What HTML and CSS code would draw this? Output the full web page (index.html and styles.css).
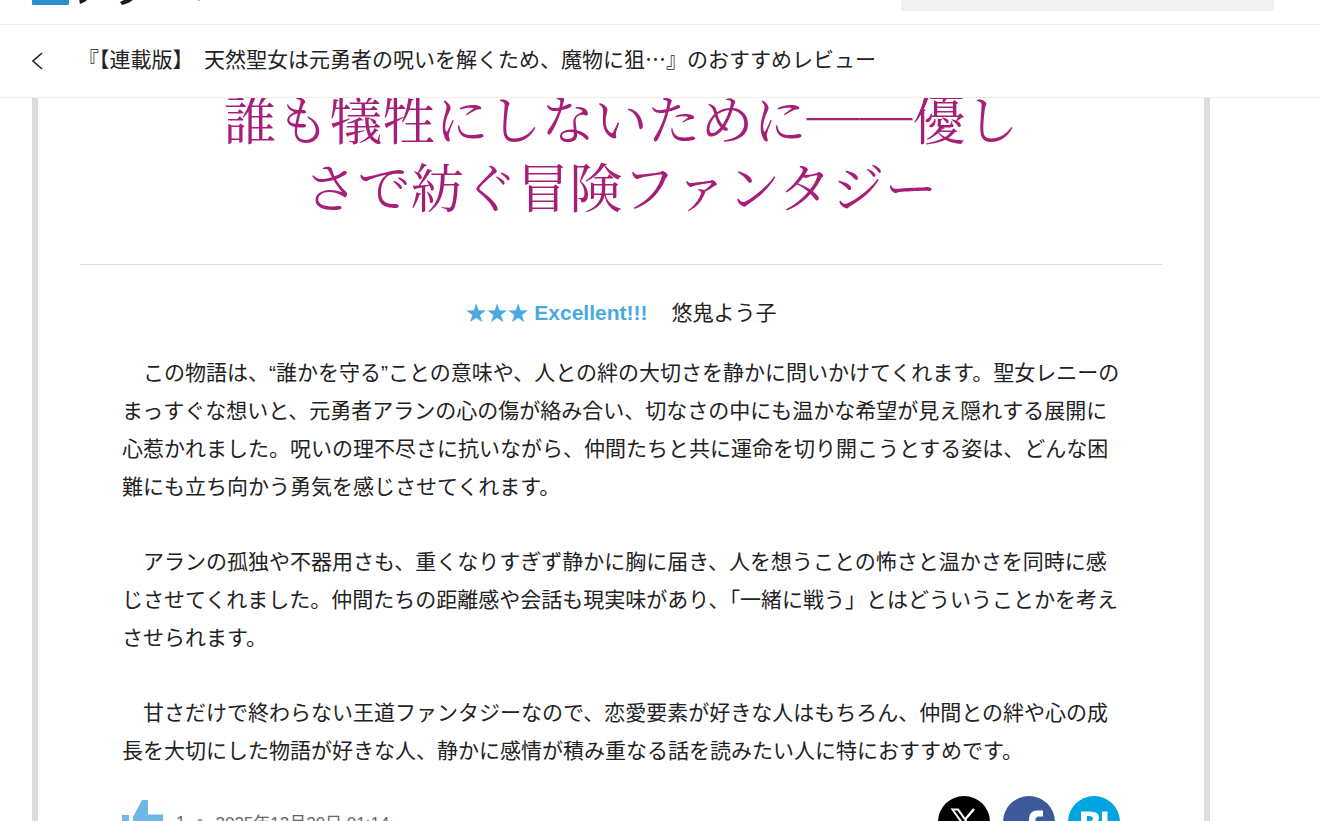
FILE: index.html
```html
<!DOCTYPE html>
<html lang="ja">
<head>
<meta charset="utf-8">
<meta name="viewport" content="width=device-width, initial-scale=1">
<title>おすすめレビュー</title>
<link rel="stylesheet" href="styles.css">
</head>
<body>
<header class="header">
  <div class="topbar">
    <svg class="logo" width="180" height="40" viewBox="0 0 180 40" aria-hidden="true">
      <rect width="37" height="40" rx="1" fill="#2891cb"/>
      <path d="M47 34h9q-2 3-8 5zM88 37l6-3h8q-4 4-12 6z" fill="#231815"/>
      <path d="M166 34h2v2h-2z" fill="#bbb"/>
    </svg>
    <input class="search" type="text" aria-label="検索">
  </div>
  <nav class="subbar">
    <a class="back" href="#" aria-label="戻る">
      <svg width="12" height="20" viewBox="0 0 12 20" fill="none" stroke="#222" stroke-width="1.6"><path d="M10 2L1 10L10 18"/></svg>
    </a>
    <a class="work" href="#">『【連載版】　天然聖女は元勇者の呪いを解くため、魔物に狙…』のおすすめレビュー</a>
  </nav>
</header>
<main class="main">
  <article class="review">
    <h1 class="title">誰も犠牲にしないために──優し<br>さで紡ぐ冒険ファンタジー</h1>
    <div class="byline"><span class="rating">★★★ Excellent!!!</span><a class="author" href="#">悠鬼よう子</a></div>
    <div class="text">
      <p>　この物語は、“誰かを守る”ことの意味や、人との絆の大切さを静かに問いかけてくれます。聖女レニーのまっすぐな想いと、元勇者アランの心の傷が絡み合い、切なさの中にも温かな希望が見え隠れする展開に心惹かれました。呪いの理不尽さに抗いながら、仲間たちと共に運命を切り開こうとする姿は、どんな困難にも立ち向かう勇気を感じさせてくれます。</p>
      <p>　アランの孤独や不器用さも、重くなりすぎず静かに胸に届き、人を想うことの怖さと温かさを同時に感じさせてくれました。仲間たちの距離感や会話も現実味があり、「一緒に戦う」とはどういうことかを考えさせられます。</p>
      <p>　甘さだけで終わらない王道ファンタジーなので、恋愛要素が好きな人はもちろん、仲間との絆や心の成長を大切にした物語が好きな人、静かに感情が積み重なる話を読みたい人に特におすすめです。</p>
    </div>
    <footer class="footer">
      <button class="like" type="button" aria-label="いいね">
        <svg width="42" height="42" viewBox="0 0 42 42" fill="#6fb8e4"><path d="M0 15h7v25H0zM11 17L20 0h6v14.500h15V25l-5 15H11z"/></svg>
      </button>
      <span class="count">1</span>
      <span class="dot"></span>
      <time class="date">2025年12月20日 01:14</time>
      <div class="share">
        <a class="social x" href="#" aria-label="X"><svg width="52" height="52" viewBox="0 0 52 52" fill="none" stroke="#fff"><path d="M14.500 13.500h5.500L37.500 38h-5.500z" stroke-width="2"/><path d="M36 13L27.500 23M24 28L15 38.500" stroke-width="2.400"/></svg></a>
        <a class="social facebook" href="#" aria-label="Facebook"><svg width="52" height="52" viewBox="0 0 52 52" fill="#fff"><path d="M40 14.500v6h-4q-3.500 0-3.500 3.500v4h7l-1 6h-6v18H26V34h-6v-6h6v-5q0-8.500 8.500-8.500z"/></svg></a>
        <a class="social hatena" href="#" aria-label="はてなブックマーク"><svg width="52" height="52" viewBox="0 0 52 52" fill="#fff"><path fill-rule="evenodd" d="M13 15.500h9q9 0 9 6 0 4-4 5 5 1 5 5.500 0 7-10 7h-9zm6 4.500v5h2q4 0 4-2.500T21 20zm0 9v5.500h2q4.500 0 4.500-2.700T21 29z"/><path d="M34 15.500h5.500v15H34z"/><circle cx="36.700" cy="36" r="3"/></svg></a>
      </div>
    </footer>
  </article>
</main>
</body>
</html>
```
FILE: styles.css
```css
* { box-sizing: border-box; }

body {
  height: 100vh;
  margin: 0;
  overflow: hidden;
  background: #fff;
  color: #222;
  font-family: "Liberation Sans", "Noto Sans CJK JP", sans-serif;
  font-size: 21px;
}

a { color: inherit; text-decoration: none; }
svg { display: block; }

.header {
  position: relative;
  z-index: 1;
  background: #fff;
}

.topbar {
  display: flex;
  align-items: flex-end;
  justify-content: space-between;
  height: 25px;
  padding: 0 46px 13px 32px;
  border-bottom: 1px solid #eee;
  overflow: hidden;
}

.logo { flex: none; margin-bottom: 6px; }

.search {
  width: 373px;
  height: 42px;
  border: 0;
  background: #f1f0ee;
}

.subbar {
  display: flex;
  align-items: center;
  height: 73px;
  padding: 0 32px;
  border-bottom: 1px solid #eee;
}

.back { flex: none; width: 46px; }

.work {
  padding-bottom: 6px;
  overflow: hidden;
  font-family: "Noto Sans CJK JP", sans-serif;
  white-space: nowrap;
  line-height: 38px;
}

.main {
  margin-top: -63px;
  padding: 0 110px 0 32px;
}

.review {
  padding: 42px;
  border: 6px solid #ddd;
}

.title {
  margin: 0;
  padding-bottom: 45px;
  border-bottom: 1px solid #ddd;
  color: #a61e77;
  font-family: "Noto Serif CJK JP", "Liberation Serif", serif;
  font-size: 53px;
  font-weight: 400;
  line-height: 68px;
  text-align: center;
}

.byline {
  display: flex;
  justify-content: center;
  gap: 24px;
  padding: 29px 0 22px;
  line-height: 38px;
}

.rating { color: #4ba9e1; font-weight: 700; }

.text {
  padding: 0 42px;
  line-height: 38px;
}

.text p { margin: 0 0 37px; }
.text p:last-child { margin: 0; }

.footer {
  display: flex;
  align-items: center;
  margin-top: 26px;
  padding: 0 42px;
  color: #666;
  font-size: 17px;
}

.like {
  margin-top: -2px;
  padding: 0;
  border: 0;
  background: none;
}

.count { margin-left: 12px; padding-top: 2px; }

.dot {
  width: 6px;
  height: 6px;
  margin: 0 12px;
  border-radius: 50%;
  background: #999;
}

.date { padding-bottom: 2px; }

.share {
  display: flex;
  gap: 13px;
  margin-left: auto;
}

.social {
  border-radius: 50%;
  overflow: hidden;
}

.x { background: #000; }
.facebook { background: #3c5a99; }
.hatena { background: #00a4de; }
```
